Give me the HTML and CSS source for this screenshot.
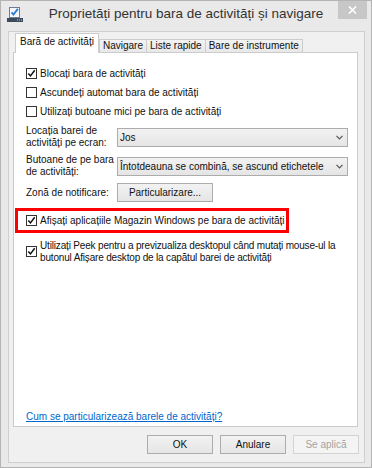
FILE: index.html
```html
<!DOCTYPE html>
<html lang="ro">
<head>
<meta charset="utf-8">
<title>Proprietăți pentru bara de activități și navigare</title>
<link rel="stylesheet" href="styles.css">
</head>
<body>

<div class="window">
  <div class="titlebar">
    <svg class="appicon" width="16" height="15" viewBox="0 0 16 15">
      <rect x="2.5" y="0.5" width="10" height="10" fill="#f5f7fa" stroke="#6f7d90"/>
      <path d="M4.5 5.3l2 2.2 4.3-5.6" fill="none" stroke="#2a7ad6" stroke-width="1.8"/>
      <rect x="0" y="11" width="16" height="4" fill="#3c4a5e"/>
      <rect x="10" y="12.5" width="1" height="1" fill="#c9d2dd"/>
      <rect x="12" y="12.5" width="1" height="1" fill="#c9d2dd"/>
      <rect x="14" y="12.5" width="1" height="1" fill="#c9d2dd"/>
    </svg>
    <div class="title">Proprietăți pentru bara de activități și navigare</div>
    <div class="close">
      <svg width="9" height="8" viewBox="0 0 9 8"><path d="M1 0.5l7 7M8 0.5l-7 7" stroke="#fff" stroke-width="1.6"/></svg>
    </div>
  </div>

  <div class="client">
    <div class="tabs">
      <div class="tab sel">Bară de activități</div>
      <div class="tab">Navigare</div>
      <div class="tab">Liste rapide</div>
      <div class="tab">Bare de instrumente</div>
    </div>

    <div class="panel">
      <div class="chk"><span class="box"><svg width="9" height="9" viewBox="0 0 9 9"><path d="M1.3 4.4l2.2 2.5 4.2-5.6" fill="none" stroke="#111" stroke-width="1.5"/></svg></span>Blocați bara de activități</div>
      <div class="chk"><span class="box"></span>Ascundeți automat bara de activități</div>
      <div class="chk"><span class="box"></span>Utilizați butoane mici pe bara de activități</div>

      <div class="field first">
        <div class="lbl">Locația barei de<br>activități pe ecran:</div>
        <div class="combo"><span>Jos</span><svg width="7" height="5" viewBox="0 0 7 5"><path d="M0.5 0.8l3 3 3-3" fill="none" stroke="#555" stroke-width="1.2"/></svg></div>
      </div>
      <div class="field">
        <div class="lbl">Butoane de pe bara<br>de activități:</div>
        <div class="combo"><span>Întotdeauna se combină, se ascund etichetele</span><svg width="7" height="5" viewBox="0 0 7 5"><path d="M0.5 0.8l3 3 3-3" fill="none" stroke="#555" stroke-width="1.2"/></svg></div>
      </div>
      <div class="field notif">
        <div class="lbl">Zonă de notificare:</div>
        <div class="btn wide">Particularizare...</div>
      </div>

      <div class="mark">
        <div class="chk"><span class="box"><svg width="9" height="9" viewBox="0 0 9 9"><path d="M1.3 4.4l2.2 2.5 4.2-5.6" fill="none" stroke="#111" stroke-width="1.5"/></svg></span>Afișați aplicațiile Magazin Windows pe bara de activități</div>
      </div>

      <div class="chk two"><span class="box"><svg width="9" height="9" viewBox="0 0 9 9"><path d="M1.3 4.4l2.2 2.5 4.2-5.6" fill="none" stroke="#111" stroke-width="1.5"/></svg></span><span class="long">Utilizați Peek pentru a previzualiza desktopul când mutați mouse-ul la butonul Afișare desktop de la capătul barei de activități</span></div>

      <a class="help" href="#">Cum se particularizează barele de activități?</a>
    </div>

    <div class="buttons">
      <div class="btn">OK</div>
      <div class="btn">Anulare</div>
      <div class="btn off">Se aplică</div>
    </div>
  </div>
</div>

</body>
</html>
```

FILE: styles.css
```css
html, body {
	margin: 0;
	padding: 0;
}
body {
	font-family: "Liberation Sans", Arial, sans-serif;
	font-size: 10px;
	color: #111;
	background: #e9e9e9;
}

.window {
	width: 372px;
	height: 468px;
	box-sizing: border-box;
	border: 1px solid #b4b4b4;
	background: #e9e9e9;
}

/* title bar */
.titlebar {
	height: 30px;
	display: grid;
	grid-template-columns: 1fr auto 1fr;
	align-items: start;
}
.appicon {
	display: block;
	margin: 6px 0 0 6px;
}
.title {
	font-size: 13.5px;
	line-height: 16px;
	padding-top: 5px;
	color: #333;
	white-space: nowrap;
}
.close {
	justify-self: end;
	width: 29px;
	height: 18px;
	margin-right: 4px;
	background: #c7c7c7;
	display: flex;
	align-items: center;
	justify-content: center;
}

/* client area */
.client {
	margin: 0 6px 0 7px;
	height: 432px;
	box-sizing: border-box;
	border: 1px solid #cfcfcf;
	background: #f0f0f0;
}

.tabs {
	display: flex;
	align-items: flex-end;
	height: 20px;
	padding-left: 6px;
}
.tab {
	height: 13px;
	box-sizing: border-box;
	padding: 0 3px;
	margin-left: -1px;
	border: 1px solid #cccccc;
	border-bottom: none;
	background: linear-gradient(#f3f3f3, #e8e8e8);
	line-height: 12px;
	white-space: nowrap;
}
.tab.sel {
	height: 20px;
	margin-left: 0;
	margin-right: 1px;
	margin-bottom: -1px;
	padding: 0 4px;
	line-height: 15px;
	background: #fff;
	position: relative;
	z-index: 1;
}

.panel {
	width: 345px;
	height: 375px;
	margin-left: 4px;
	box-sizing: border-box;
	border: 1px solid #cccccc;
	background: #fff;
	padding: 11px 8px 3px 12px;
	display: flex;
	flex-direction: column;
}

.chk {
	display: flex;
	align-items: center;
	height: 19px;
	white-space: nowrap;
}
.box {
	flex: none;
	width: 11px;
	height: 11px;
	box-sizing: border-box;
	border: 1px solid #333;
	background: #fff;
	margin-right: 3px;
	display: flex;
	align-items: center;
	justify-content: center;
}
.chk.two {
	height: auto;
	align-items: flex-start;
	line-height: 12px;
	white-space: normal;
	margin-top: 7px;
}
.chk.two .box {
	margin-top: 6px;
}
.long {
	letter-spacing: -0.17px;
}

.field {
	display: flex;
	align-items: center;
	margin-top: 5px;
}
.field.first {
	margin-top: 4px;
}
.lbl {
	width: 91px;
	flex: none;
	line-height: 12px;
}
.notif {
	height: 19px;
}
.combo {
	width: 231px;
	height: 19px;
	box-sizing: border-box;
	border: 1px solid #acacac;
	background: linear-gradient(#f2f2f2, #e5e5e5);
	padding: 0 4px 0 2px;
	display: flex;
	align-items: center;
	justify-content: space-between;
}

.mark {
	align-self: flex-start;
	width: 274px;
	height: 25px;
	box-sizing: border-box;
	margin: 6px 0 0 -11px;
	border: 3px solid #ff0000;
	padding-left: 8px;
}

.help {
	margin-top: auto;
	line-height: 12px;
	color: #0066cc;
	text-decoration: underline;
	align-self: flex-start;
}

.buttons {
	display: flex;
	justify-content: flex-end;
	gap: 7px;
	margin-top: 8px;
	padding-right: 5px;
}
.btn {
	width: 66px;
	height: 19px;
	box-sizing: border-box;
	border: 1px solid #acacac;
	background: linear-gradient(#f2f2f2, #e5e5e5);
	display: flex;
	align-items: center;
	justify-content: center;
}
.btn.wide {
	width: 96px;
}
.btn.off {
	border-color: #d3d3d3;
	background: #f4f4f4;
	color: #a3a3a3;
}
```
